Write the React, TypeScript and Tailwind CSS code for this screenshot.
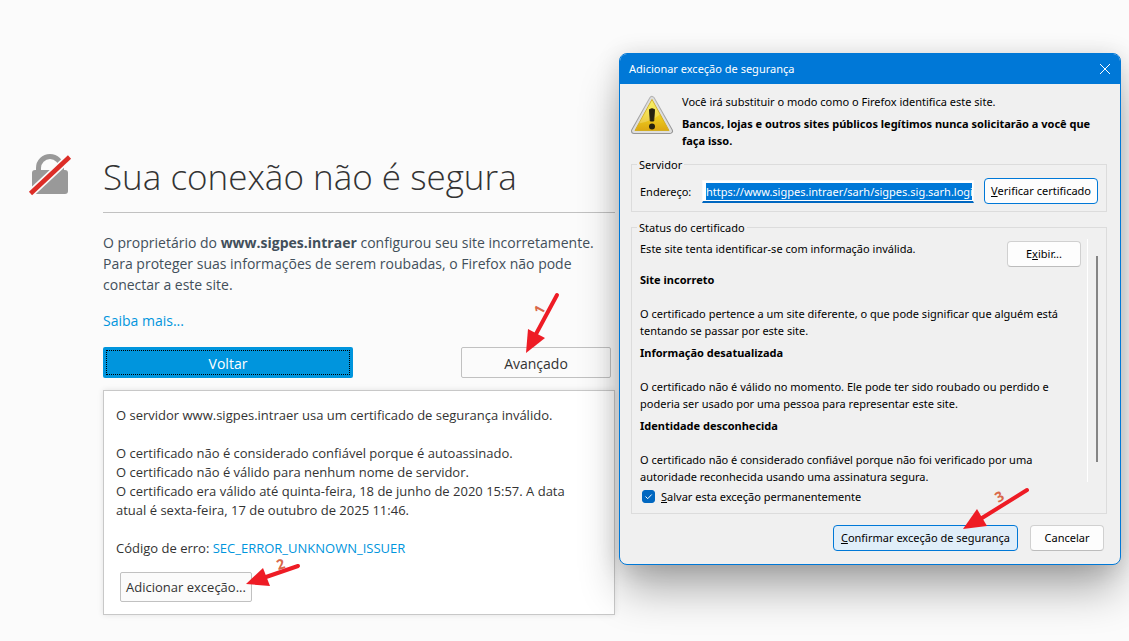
import { useState } from 'react';

interface Problem {
  title: string;
  lines: string[];
}

const problems: Problem[] = [
  {
    title: 'Site incorreto',
    lines: [
      'O certificado pertence a um site diferente, o que pode significar que alguém está',
      'tentando se passar por este site.',
    ],
  },
  {
    title: 'Informação desatualizada',
    lines: [
      'O certificado não é válido no momento. Ele pode ter sido roubado ou perdido e',
      'poderia ser usado por uma pessoa para representar este site.',
    ],
  },
  {
    title: 'Identidade desconhecida',
    lines: [
      'O certificado não é considerado confiável porque não foi verificado por uma',
      'autoridade reconhecida usando uma assinatura segura.',
    ],
  },
];

const dialogButton =
  'flex h-[26px] items-center justify-center rounded border border-[#d0d0d0] border-b-[#bcbcbc] bg-[#fdfdfd] pb-[2px] whitespace-nowrap';

function BrokenLockIcon() {
  return (
    <svg className="mt-[2px] h-[44px] w-[44px]" viewBox="0 0 44 44" fill="none" aria-hidden="true">
      <path d="M10.500 20V14a11.500 11.500 0 0 1 23 0V20" stroke="#999" strokeWidth="5" />
      <rect x="4" y="16" width="36" height="24" rx="3" fill="#999" />
      <path d="M-2 43.700L46 -1.200" stroke="#fbfbfb" strokeWidth="8" />
      <path d="M2.500 39.500L41.500 3" stroke="#dc2d27" strokeWidth="4.600" />
    </svg>
  );
}

function WarningIcon() {
  return (
    <svg className="h-[40px] w-[44px] shrink-0" viewBox="0 0 44 40" aria-hidden="true">
      <defs>
        <linearGradient id="warn-fill" x1="0" y1="0" x2="0" y2="1">
          <stop offset="0" stopColor="#f6ee3c" />
          <stop offset="0.5" stopColor="#efd21f" />
          <stop offset="1" stopColor="#dda712" />
        </linearGradient>
        <linearGradient id="warn-edge" x1="0" y1="0" x2="0" y2="1">
          <stop offset="0" stopColor="#b4b4b4" />
          <stop offset="1" stopColor="#959595" />
        </linearGradient>
      </defs>
      <path d="M21 4L39 36H3z" fill="url(#warn-edge)" stroke="url(#warn-edge)" strokeWidth="6" strokeLinejoin="round" />
      <path d="M21 4L39 36H3z" fill="#dedede" stroke="#dedede" strokeWidth="4" strokeLinejoin="round" />
      <path d="M21 4.500L38 35.500H4z" fill="url(#warn-fill)" stroke="#d3ae22" strokeWidth="1" strokeLinejoin="round" />
      <path d="M21 5L29 19.500Q21 26 8 28.500z" fill="#fff" opacity="0.220" />
      <path d="M18.500 14.500Q21 13 23.500 14.500L22.700 26H19.300z" fill="#26220f" stroke="#26220f" strokeLinejoin="round" />
      <circle cx="21" cy="31.500" r="3" fill="#26220f" />
    </svg>
  );
}

function Arrows() {
  return (
    <svg className="pointer-events-none absolute top-0 left-0 h-[641px] w-[1129px]" viewBox="0 0 1129 641" aria-hidden="true">
      <g fill="#d9694a" fontFamily="'Open Sans', sans-serif" fontSize="14" fontWeight="700" textAnchor="middle">
        <text transform="translate(544 312) rotate(-62)">1</text>
        <text transform="translate(282 569) rotate(-17)">2</text>
        <text transform="translate(1002 501) rotate(-31)">3</text>
      </g>
      <g stroke="#ee1c25" strokeWidth="4" strokeLinecap="round">
        <path d="M557 295L536 334" />
        <path d="M298 566L266 577" />
        <path d="M1027 490L982 518" />
      </g>
      <g fill="#ee1c25">
        <path d="M526 353L528 329L545 338z" />
        <path d="M246 584L263 568L270 586z" />
        <path d="M963 529L977 509L987 526z" />
      </g>
    </svg>
  );
}

function ErrorPage() {
  return (
    <main className="flex gap-[31px] pt-[152px] pl-7 text-[#424f5a]">
      <BrokenLockIcon />
      <div className="w-full max-w-[512px] whitespace-nowrap">
        <h1 className="h-[61px] border-b border-[#c1c1c1] text-[35px] leading-[50px] font-light text-[#333]">
          Sua conexão não é segura
        </h1>
        <p className="mt-[19px] text-[14px] leading-[21px]">
          O proprietário do <b>www.sigpes.intraer</b> configurou seu site incorretamente.
          <br />
          Para proteger suas informações de serem roubadas, o Firefox não pode
          <br />
          conectar a este site.
        </p>
        <a href="#saiba-mais" className="mt-[15px] block text-[14px] leading-[21px] text-[#0095dd]">
          Saiba mais...
        </a>
        <div className="mt-4 flex justify-between pr-1 text-[14px]">
          <button className="h-[31px] w-[250px] rounded-[2px] bg-[#0095dd] p-[3px] text-white">
            <span className="flex h-full items-center justify-center border border-dotted border-black pt-px">Voltar</span>
          </button>
          <button className="h-[31px] w-[150px] rounded-[2px] border border-[#c1c1c1] bg-[#fbfbfb] pt-px text-[#333]">
            Avançado
          </button>
        </div>
        <section className="mt-3 border border-[#c8c8c8] bg-white px-3 pt-[15px] pb-3 text-[13px] leading-[19px] text-[#333] shadow-[0_0_6px_rgba(0,0,0,0.1)]">
          <p>O servidor www.sigpes.intraer usa um certificado de segurança inválido.</p>
          <p className="mt-[19px]">
            O certificado não é considerado confiável porque é autoassinado.
            <br />
            O certificado não é válido para nenhum nome de servidor.
            <br />
            O certificado era válido até quinta-feira, 18 de junho de 2020 15:57. A data
            <br />
            atual é sexta-feira, 17 de outubro de 2025 11:46.
          </p>
          <p className="mt-[19px]">
            Código de erro:{' '}
            <a href="#codigo" className="text-[#0095dd]">
              SEC_ERROR_UNKNOWN_ISSUER
            </a>
          </p>
          <button className="mt-[14px] ml-1 h-[30px] w-[132px] rounded-[2px] border border-[#c1c1c1] bg-[#fbfbfb] pt-px">
            Adicionar exceção...
          </button>
        </section>
      </div>
    </main>
  );
}

function ExceptionDialog() {
  const [permanent, setPermanent] = useState(true);
  const [address, setAddress] = useState('https://www.sigpes.intraer/sarh/sigpes.sig.sarh.login');

  return (
    <div
      role="dialog"
      aria-labelledby="dialog-title"
      className="absolute top-[53px] left-[619px] w-[502px] rounded-lg border border-[#0078d7] bg-[#f0f0f0] font-['Noto_Sans','Open_Sans',sans-serif] text-[11px] leading-[17px] whitespace-nowrap text-black shadow-[0_2px_24px_rgba(0,0,0,0.14),0_28px_44px_-4px_rgba(0,0,0,0.32)]"
    >
      <header className="flex h-[30px] items-center justify-between rounded-t-[7px] bg-[#0078d7] pr-[10px] pb-px pl-[9px] text-white">
        <h2 id="dialog-title">Adicionar exceção de segurança</h2>
        <button aria-label="Fechar">
          <svg className="h-[10px] w-[10px]" viewBox="0 0 10 10" stroke="currentColor" fill="none">
            <path d="M0 0L10 10M10 0L0 10" />
          </svg>
        </button>
      </header>

      <div className="px-[11px] pb-[13px]">
        <div className="flex gap-[7px] pt-[9px] pr-3">
          <div className="pt-[2px]">
            <WarningIcon />
          </div>
          <div>
            <p>Você irá substituir o modo como o Firefox identifica este site.</p>
            <p className="mt-[5px] font-bold">
              Bancos, lojas e outros sites públicos legítimos nunca solicitarão a você que
              <br />
              faça isso.
            </p>
          </div>
        </div>

        <fieldset className="mt-[7px] mr-[2px] min-w-0 border border-[#dcdcdc] px-2 pb-[7px]">
          <legend className="-ml-[3px] px-[2px]">Servidor</legend>
          <div className="flex items-center pt-[5px]">
            <label htmlFor="address" className="w-[62px]">
              Endereço:
            </label>
            <div className="min-w-0 flex-1 border border-b-2 border-[#fafafa] border-b-[#0067c0] bg-white">
              <input
                id="address"
                value={address}
                onChange={(e) => setAddress(e.target.value)}
                className="block h-5 w-full bg-[#0078d7] bg-clip-content pt-[2px] pr-px pb-px pl-[3px] leading-[17px] text-white outline-none"
              />
            </div>
            <button className="ml-[10px] flex h-[26px] w-[114px] items-center justify-center rounded border border-[#0078d7] bg-[#fdfdfd] pb-[2px]">
              <u>V</u>erificar certificado
            </button>
          </div>
        </fieldset>

        <fieldset className="mt-[7px] mr-[2px] min-w-0 border border-[#dcdcdc] pb-2 pl-2">
          <legend className="-ml-[3px] px-[2px]">Status do certificado</legend>
          <div className="flex h-[246px] pt-[3px]">
            <div className="min-w-0 flex-1">
              <div className="flex h-8 items-start justify-between pr-[6px]">
                <p className="pt-px">Este site tenta identificar-se com informação inválida.</p>
                <button className={`${dialogButton} mt-[2px] w-[74px]`}>
                  E<u>x</u>ibir...
                </button>
              </div>
              {problems.map((problem) => (
                <div key={problem.title} className="mb-[5px]">
                  <h3 className="mb-[17px] font-bold">{problem.title}</h3>
                  <p>
                    {problem.lines[0]}
                    <br />
                    {problem.lines[1]}
                  </p>
                </div>
              ))}
            </div>
            <div className="flex w-[19px] justify-center border-l border-white pt-[17px]">
              <div className="h-[206px] w-[2px] bg-[#858585]" />
            </div>
          </div>
          <label className="flex items-center gap-[6px] pt-[6px] pl-[2px]">
            <span className="relative flex h-[13px] w-[13px]">
              <input
                type="checkbox"
                checked={permanent}
                onChange={(e) => setPermanent(e.target.checked)}
                className="h-[13px] w-[13px] appearance-none rounded-[3px] border border-[#0067c0] bg-white checked:bg-[#0067c0]"
              />
              <svg className="pointer-events-none absolute inset-0 h-[13px] w-[13px]" viewBox="0 0 13 13" fill="none" stroke="#fff">
                <path d="M3.500 6.500L5.700 8.700L9.700 4.500" />
              </svg>
            </span>
            <span>
              <u>S</u>alvar esta exceção permanentemente
            </span>
          </label>
        </fieldset>

        <footer className="mt-[11px] flex justify-end gap-3 pr-[5px]">
          <button className="flex h-[26px] w-[185px] items-center justify-center rounded border border-[#0078d7] bg-[#e0eef9] pb-[2px]">
            <u>C</u>onfirmar exceção de segurança
          </button>
          <button className={`${dialogButton} w-[74px]`}>Cancelar</button>
        </footer>
      </div>
    </div>
  );
}

export default function App() {
  return (
    <div className="relative min-h-screen overflow-hidden bg-[#fbfbfb] font-['Open_Sans','Noto_Sans',sans-serif]">
      <ErrorPage />
      <ExceptionDialog />
      <Arrows />
    </div>
  );
}
